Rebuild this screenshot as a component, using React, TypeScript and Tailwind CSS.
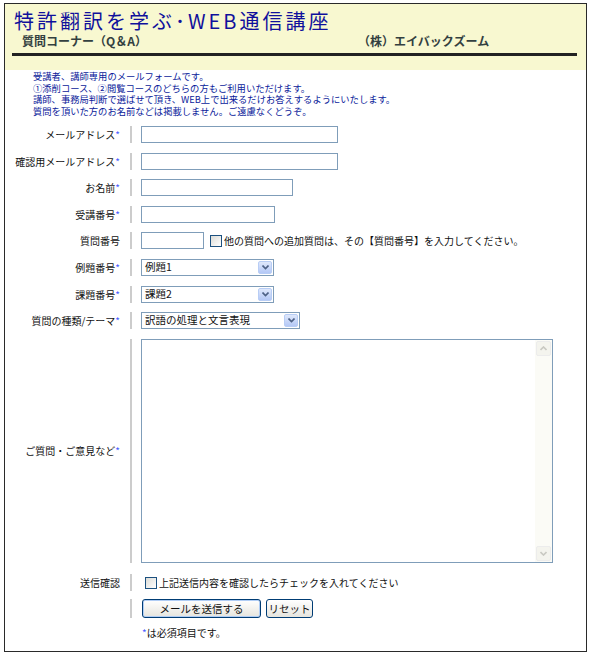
import React from 'react';

const font = { fontFamily: '"Noto Sans CJK JP", "Noto Sans", sans-serif' };

const Star = () => <span className="text-[#4a5cff]">*</span>;

const Row = ({
  label,
  required,
  children,
  tall,
}: {
  label?: string;
  required?: boolean;
  children: React.ReactNode;
  tall?: boolean;
}) => (
  <div className={`flex items-stretch ${tall ? '' : 'h-[17px]'}`}>
    <div className="w-[125px] pr-[10px] flex items-center justify-end whitespace-nowrap text-[10px] text-[#111]">
      {label}
      {required && <Star />}
    </div>
    <div className="w-[2px] bg-[#cccccc]" />
    <div className="pl-[9px] flex items-center">{children}</div>
  </div>
);

const TextBox = ({ w }: { w: string }) => (
  <div className={`${w} h-[17px] border border-[#7f9db9] bg-white`} />
);

const Select = ({ w, value }: { w: string; value: string }) => (
  <div className={`${w} h-[17px] border border-[#7f9db9] bg-white flex items-center justify-between pl-[3px] pr-px`}>
    <span className="text-[10.5px] text-[#111] whitespace-nowrap leading-none">{value}</span>
    <div className="w-[14px] h-[13px] rounded-[2px] border border-[#b8cdf5] bg-gradient-to-b from-[#dfe8fb] to-[#b4c8f6] flex items-center justify-center">
      <svg width="7" height="5" viewBox="0 0 7 5">
        <path d="M0.5 0.5 L3.5 3.5 L6.5 0.5" fill="none" stroke="#4d6185" strokeWidth="1.6" />
      </svg>
    </div>
  </div>
);

const CheckBox = () => (
  <div className="w-[12px] h-[12px] border border-[#1c5180] bg-gradient-to-br from-[#dcdcd7] to-white" />
);

const ScrollArrow = ({ up }: { up?: boolean }) => (
  <div className="w-[15px] h-[15px] rounded-[2px] border border-[#ececec] bg-[#f4f4ee] flex items-center justify-center">
    <svg width="7" height="5" viewBox="0 0 7 5">
      <path
        d={up ? 'M0.5 4 L3.5 1 L6.5 4' : 'M0.5 1 L3.5 4 L6.5 1'}
        fill="none"
        stroke="#c9c9c2"
        strokeWidth="1.6"
      />
    </svg>
  </div>
);

export default function App() {
  return (
    <div className="bg-white w-[591px] h-[656px] pt-[3px] pl-[4px]" style={font}>
      <div className="w-[583px] h-[649px] border border-[#2a2a2a] bg-white">
        {/* header */}
        <div className="bg-[#f8f8d0] h-[66px] pt-[5px]">
          <div className="pl-[9px] text-[20px] leading-[23px] tracking-[3px] text-[#10109c] whitespace-nowrap">
            特許翻訳を学ぶ･WEB通信講座
          </div>
          <div className="flex pl-[17px] mt-[2px] text-[12px] leading-[14px] font-bold text-[#334040] whitespace-nowrap">
            <span className="w-[336px]">質問コーナー（Q＆A）</span>
            <span>（株）エイバックズーム</span>
          </div>
          <div className="ml-[7px] mt-[5px] w-[565px] h-[3px] bg-[#222]" />
        </div>

        {/* notes */}
        <div className="pl-[28px] pt-px text-[9.3px] leading-[11.5px] text-[#0a1a9a] whitespace-nowrap">
          <div>受講者、講師専用のメールフォームです。</div>
          <div>①添削コース、②閲覧コースのどちらの方もご利用いただけます。</div>
          <div>講師、事務局判断で選ばせて頂き、WEB上で出来るだけお答えするようにいたします。</div>
          <div>質問を頂いた方のお名前などは掲載しません。ご遠慮なくどうぞ。</div>
        </div>

        {/* form */}
        <div className="mt-[9px] flex flex-col gap-[9.6px]">
          <Row label="メールアドレス" required>
            <TextBox w="w-[197px]" />
          </Row>
          <Row label="確認用メールアドレス" required>
            <TextBox w="w-[197px]" />
          </Row>
          <Row label="お名前" required>
            <TextBox w="w-[152px]" />
          </Row>
          <Row label="受講番号" required>
            <TextBox w="w-[134px]" />
          </Row>
          <Row label="質問番号">
            <TextBox w="w-[63px]" />
            <div className="ml-[6px]">
              <CheckBox />
            </div>
            <span className="ml-[2px] text-[10px] text-[#111] whitespace-nowrap">
              他の質問への追加質問は、その【質問番号】を入力してください。
            </span>
          </Row>
          <Row label="例題番号" required>
            <Select w="w-[133px]" value="例題1" />
          </Row>
          <Row label="課題番号" required>
            <Select w="w-[133px]" value="課題2" />
          </Row>
          <Row label="質問の種類/テーマ" required>
            <Select w="w-[159px]" value="訳語の処理と文言表現" />
          </Row>
          <Row label="ご質問・ご意見など" required tall>
            <div className="w-[412px] h-[224px] border border-[#7f9db9] bg-white flex justify-end">
              <div className="w-[17px] h-full bg-[#fbfbf6] flex flex-col justify-between p-px">
                <ScrollArrow up />
                <ScrollArrow />
              </div>
            </div>
          </Row>
          <div className="h-[2px] -mt-[9.6px]" />
          <Row label="送信確認">
            <div className="ml-[4px]">
              <CheckBox />
            </div>
            <span className="ml-[2px] text-[10px] text-[#111] whitespace-nowrap">
              上記送信内容を確認したらチェックを入れてください
            </span>
          </Row>
        </div>

        <div className="mt-[8px] flex h-[19px]">
          <div className="w-[125px]" />
          <div className="w-[2px] bg-[#cccccc]" />
          <div className="pl-[10px] flex gap-[5px]">
            <button className="w-[119px] h-[19px] rounded-[3px] border border-[#003c74] bg-gradient-to-b from-white to-[#e6e5de] shadow-[inset_0_0_0_1px_#b0cdf5] text-[10.5px] text-[#111] leading-none">
              メールを送信する
            </button>
            <button className="w-[47px] h-[19px] rounded-[3px] border border-[#003c74] bg-gradient-to-b from-white to-[#e6e5de] text-[10.5px] text-[#111] leading-none">
              リセット
            </button>
          </div>
        </div>

        <div className="pl-[137px] mt-[7px] text-[10px] text-[#111]">
          <Star />は必須項目です。
        </div>
      </div>
    </div>
  );
}
